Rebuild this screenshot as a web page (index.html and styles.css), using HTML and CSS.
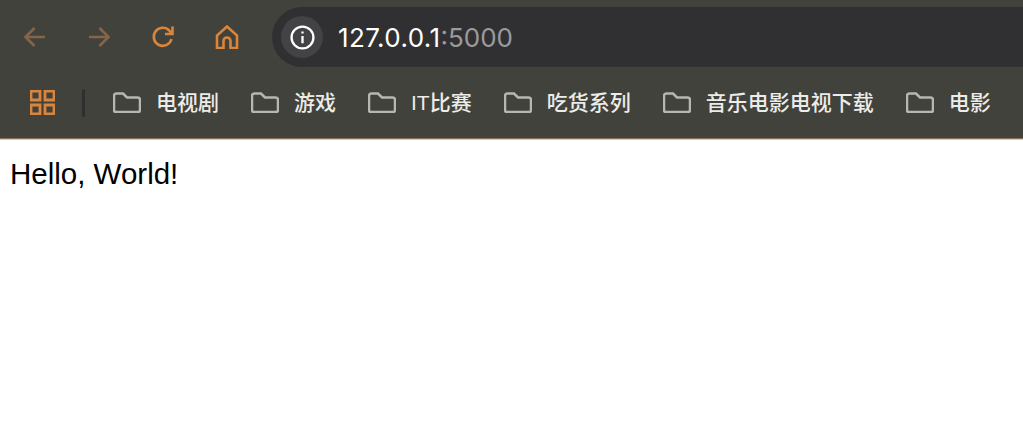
FILE: index.html
```html
<!DOCTYPE html>
<html>
<head>
	<title>127.0.0.1:5000</title>
	<meta charset="utf-8">
	<link rel="stylesheet" href="styles.css">
</head>
<body>

	<div class="chrome">
		<div class="toolbar">
			<div class="nav">
				<svg class="nav-icon dim" viewBox="0 0 24 24"><path d="M22 12H2.500M11.500 3 2.500 12l9 9"/></svg>
				<svg class="nav-icon dim" viewBox="0 0 24 24"><path d="M2 12h19.500M12.500 3l9 9-9 9"/></svg>
				<svg class="nav-icon" viewBox="0 0 24 24"><path d="M20.500 14a9 9 0 1 1-2.200-8.400L21 8.500M21.500 1.500v7.500h-7.500"/></svg>
				<svg class="nav-icon" viewBox="0 0 24 24"><path d="M2 23V10.500L12 1.500l10 9V23h-6.500v-7a3.500 3.500 0 0 0-7 0v7z"/></svg>
			</div>
			<div class="omnibox">
				<span class="info">
					<svg viewBox="0 0 24 24" width="25" height="25"><circle cx="12" cy="12" r="10.500"/><path d="M12 10.500v7M12 6.200v2"/></svg>
				</span>
				<span class="url">127.0.0.1<span class="port">:5000</span></span>
			</div>
		</div>
		<div class="bookmarks">
			<svg class="apps" viewBox="0 0 25 25"><path d="M1 1h9v9H1zM15 1h9v9h-9zM1 15h9v9H1zM15 15h9v9h-9z"/></svg>
			<span class="sep"></span>
			<a class="mark"><svg class="folder" viewBox="0 0 28 21"><path d="M1 4a2.500 2.500 0 0 1 2.500-2.500h6.500l4 4h10.500A2.500 2.500 0 0 1 27 8v10a2 2 0 0 1-2 2H3a2 2 0 0 1-2-2z"/></svg><span class="label">电视剧</span></a>
			<a class="mark"><svg class="folder" viewBox="0 0 28 21"><path d="M1 4a2.500 2.500 0 0 1 2.500-2.500h6.500l4 4h10.500A2.500 2.500 0 0 1 27 8v10a2 2 0 0 1-2 2H3a2 2 0 0 1-2-2z"/></svg><span class="label">游戏</span></a>
			<a class="mark"><svg class="folder" viewBox="0 0 28 21"><path d="M1 4a2.500 2.500 0 0 1 2.500-2.500h6.500l4 4h10.500A2.500 2.500 0 0 1 27 8v10a2 2 0 0 1-2 2H3a2 2 0 0 1-2-2z"/></svg><span class="label">IT比赛</span></a>
			<a class="mark"><svg class="folder" viewBox="0 0 28 21"><path d="M1 4a2.500 2.500 0 0 1 2.500-2.500h6.500l4 4h10.500A2.500 2.500 0 0 1 27 8v10a2 2 0 0 1-2 2H3a2 2 0 0 1-2-2z"/></svg><span class="label">吃货系列</span></a>
			<a class="mark"><svg class="folder" viewBox="0 0 28 21"><path d="M1 4a2.500 2.500 0 0 1 2.500-2.500h6.500l4 4h10.500A2.500 2.500 0 0 1 27 8v10a2 2 0 0 1-2 2H3a2 2 0 0 1-2-2z"/></svg><span class="label">音乐电影电视下载</span></a>
			<a class="mark"><svg class="folder" viewBox="0 0 28 21"><path d="M1 4a2.500 2.500 0 0 1 2.500-2.500h6.500l4 4h10.500A2.500 2.500 0 0 1 27 8v10a2 2 0 0 1-2 2H3a2 2 0 0 1-2-2z"/></svg><span class="label">电影</span></a>
		</div>
	</div>

	<p class="hello">Hello, World!</p>

</body>
</html>
```

FILE: styles.css
```css
*, *:before, *:after { box-sizing: border-box; }

html, body { margin: 0; height: 100%; overflow: hidden; }

body { background-color: #fff; color: #000; font-family: "Liberation Sans", Arial, sans-serif; }

.chrome { height: 139px; background-color: #42423c; border-bottom: 1px solid #86725f; box-shadow: 0 1px 0 #d8ccc0; margin-bottom: 1px; }

/* top row: nav buttons + address bar */
.toolbar { display: flex; height: 67px; padding-top: 7px; }

.nav { display: flex; align-items: center; gap: 40px; width: 272px; padding-left: 23px; }

.nav-icon { width: 24px; height: 24px; flex: none; fill: none; stroke: #d9853b; stroke-width: 2.600; }
.nav-icon.dim { stroke: #84654a; }

.omnibox {
	flex: 1; display: flex; align-items: center; padding-left: 9px;
	background-color: #303033; border-radius: 30px 0 0 30px;
}

.info {
	display: flex; align-items: center; justify-content: center; flex: none;
	width: 42px; height: 42px; margin-right: 15px;
	background-color: #434345; border-radius: 50%;
}
.info svg { fill: none; stroke: #fff; stroke-width: 2.200; }

.url { color: #fff; font-size: 26px; letter-spacing: 0.4px; font-family: Inter, "Liberation Sans", sans-serif; }
.port { color: #9a9a9c; letter-spacing: 0; }

/* bookmarks row */
.bookmarks { display: flex; align-items: center; height: 71px; padding-left: 30px; }

.apps { width: 25px; height: 25px; flex: none; fill: none; stroke: #d9853b; stroke-width: 2.800; }

.sep { width: 3px; height: 28px; margin: 0 28px 0 27px; flex: none; background-color: #2f2f30; border-radius: 2px; }

.mark {
	display: flex; align-items: center; margin-right: 32px; white-space: nowrap;
	color: #ecece9; font-size: 21px; font-weight: 500; font-family: "Liberation Sans", "Noto Sans CJK SC", sans-serif;
}

.label { padding-bottom: 4px; }

.folder { width: 28px; height: 21px; margin-right: 15px; flex: none; fill: none; stroke: #b6b6b3; stroke-width: 2.500; }

.hello { margin: 0; padding: 16px 10px; font-size: 29.500px; line-height: 36px; }
```
